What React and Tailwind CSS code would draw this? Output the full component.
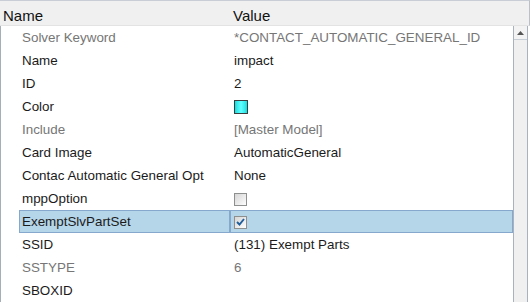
import React from "react";

const rows = [
  { name: "Solver Keyword", value: "*CONTACT_AUTOMATIC_GENERAL_ID", gray: true },
  { name: "Name", value: "impact" },
  { name: "ID", value: "2" },
  { name: "Color", type: "color" },
  { name: "Include", value: "[Master Model]", gray: true },
  { name: "Card Image", value: "AutomaticGeneral" },
  { name: "Contac Automatic General Opt", value: "None" },
  { name: "mppOption", type: "check", checked: false },
  { name: "ExemptSlvPartSet", type: "check", checked: true, selected: true },
  { name: "SSID", value: "(131) Exempt Parts" },
  { name: "SSTYPE", value: "6", gray: true },
  { name: "SBOXID", value: "" },
];

function Checkbox({ checked }) {
  return (
    <div className="w-[13px] h-[13px] border border-[#8e8f8f] bg-gradient-to-br from-[#d6d6d6] to-[#fdfdfd] flex items-center justify-center">
      {checked && (
        <svg width="9" height="8" viewBox="0 0 9 8">
          <path d="M1 4 L3.5 6.5 L8 1" fill="none" stroke="#1f5e9c" strokeWidth="1.9" />
        </svg>
      )}
    </div>
  );
}

export default function App() {
  return (
    <div
      className="w-[530px] h-[302px] bg-white relative overflow-hidden text-[13.4px] text-[#1b1b1b]"
      style={{ fontFamily: '"Liberation Sans", Arial, sans-serif' }}
    >
      <div className="flex h-[26px] bg-[#f0f0f0] border-b border-[#e3e3e3] border-t border-t-[#c9ced6] border-r border-r-[#b9c0c9] text-[15px] text-[#111]">
        <div className="w-[230px] pl-[3px] pt-[4px]">Name</div>
        <div className="flex-1 pl-[3px] pt-[4px]">Value</div>
      </div>
      <div className="flex h-[276px]">
        <div className="flex-1 flex flex-col border-l border-[#a6aeb9] pl-[19px]">
          {rows.map((r, i) => (
            <div
              key={i}
              className={
                "flex h-[23px] items-center " +
                (r.selected ? "bg-[#b5d5e9] border border-[#86a8cc] -ml-[1px]" : "")
              }
            >
              <div
                className={
                  "w-[211px] pl-[2px] pt-[1px] h-full flex items-center " +
                  (r.gray ? "text-[#767676] " : "") +
                  (r.selected ? "border-r-2 border-[#86a8cc]" : "")
                }
              >
                {r.name}
              </div>
              <div className={"flex-1 pl-[3px] pt-[1px] h-full flex items-center " + (r.gray ? "text-[#767676]" : "")}>
                {r.type === "color" ? (
                  <div className="w-[14px] h-[14px] border border-[#3c3c3c] bg-gradient-to-r from-[#00dede] via-[#5fffff] to-[#00dede]" />
                ) : r.type === "check" ? (
                  <Checkbox checked={r.checked} />
                ) : (
                  r.value
                )}
              </div>
            </div>
          ))}
        </div>
        <div className="w-[15px] mr-[2px] flex flex-col bg-[#f0f0f0] border-l border-r border-[#a9b3bf]">
          <div className="h-[14px] flex items-center justify-center border-b border-[#c8ced6] bg-[#f3f3f3]">
            <svg width="7" height="4" viewBox="0 0 7 4">
              <path d="M0 4 L3.5 0 L7 4 Z" fill="#555" />
            </svg>
          </div>
          <div className="flex-1" />
        </div>
      </div>
    </div>
  );
}
